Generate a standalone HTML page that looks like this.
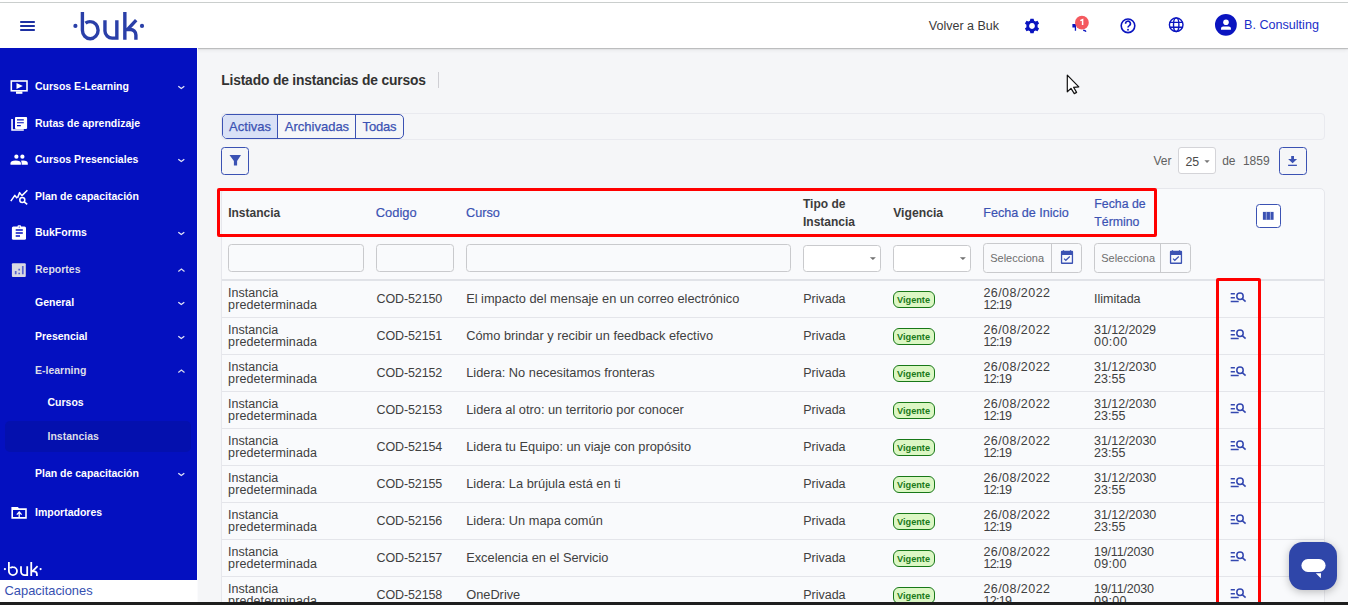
<!DOCTYPE html>
<html><head><meta charset="utf-8"><style>
*{box-sizing:border-box;margin:0;padding:0}
html,body{width:1348px;height:605px;overflow:hidden;background:#f5f6f8;font-family:"Liberation Sans",sans-serif;position:relative}
.a{position:absolute;white-space:nowrap}
svg{position:absolute;overflow:visible}
</style></head><body>
<div class="a" style="left:0;top:0;width:1348px;height:2px;background:#fff"></div>
<div class="a" style="left:0;top:2px;width:1348px;height:1px;background:#ccd0cf"></div>
<div class="a" style="left:0;top:3px;width:1348px;height:45px;background:#fff;box-shadow:0 1px 1px rgba(0,0,0,.19),0 2px 4px rgba(0,0,0,.07);z-index:5"></div>
<svg style="left:0;top:0;z-index:6" width="1348" height="48"><rect x="20.2" y="21" width="14.6" height="2" fill="#1d30a2"/><rect x="20.2" y="25" width="14.6" height="2" fill="#1d30a2"/><rect x="20.2" y="29" width="14.6" height="2" fill="#1d30a2"/><g fill="none" stroke="#2a3fa8" stroke-width="3.4"><path d="M82.4 11.9 V30.2 A7.85 8.55 0 1 0 90.25 21.6 A7.85 8.55 0 0 0 85.5 23.2"/><path d="M104.95 20.2 V31 A7.2 7.2 0 0 0 112.2 38.1 H116.85 V20.2"/><path d="M124.85 11.9 V39.8 M136.2 20.2 L127.5 29.5 H130.3 A5.5 5.5 0 0 1 135.9 35 V39.8"/></g><circle cx="75.4" cy="25.9" r="2.1" fill="#2a3fa8"/><circle cx="142" cy="25.9" r="2.1" fill="#2a3fa8"/></svg>
<div style="position:absolute;left:0;top:0;z-index:7"><div class="a" style="left:928.8px;top:20px;font-size:12.5px;line-height:12.5px;color:#3a3a3a;font-weight:normal;">Volver a Buk</div>
<div class="a" style="left:1244px;top:19px;font-size:12.6px;line-height:12.6px;color:#1b2ec8;font-weight:normal;">B. Consulting</div>
</div><svg style="left:0;top:0;z-index:7" width="1348" height="48"><g transform="translate(1032 26)"><path fill="#0a14c0" fill-rule="evenodd" d="M-1.6 -7.3 H1.6 L2.1 -5.3 L3.6 -4.5 L5.5 -5.3 L7.1 -2.6 L5.6 -1.2 V1.2 L7.1 2.6 L5.5 5.3 L3.6 4.5 L2.1 5.3 L1.6 7.3 H-1.6 L-2.1 5.3 L-3.6 4.5 L-5.5 5.3 L-7.1 2.6 L-5.6 1.2 V-1.2 L-7.1 -2.6 L-5.5 -5.3 L-3.6 -4.5 L-2.1 -5.3 Z M0 -2.9 A2.9 2.9 0 1 0 0.01 -2.9 Z"/></g><path fill="#0a14c0" d="M1072.4 24 H1076 V27.5 H1076.1 V30.7 H1074.8 V27.5 H1072.4 Z"/><path stroke="#0a14c0" stroke-width="1.5" fill="none" d="M1083.2 30.2 Q1085.2 30.4 1086 31.6"/><circle cx="1081.9" cy="22.7" r="6.9" fill="#f4595e"/><path d="M1080.3 20.6 L1082.6 19.7 V24.9" fill="none" stroke="#fff" stroke-width="1.5"/><circle cx="1128" cy="25.8" r="6.8" fill="none" stroke="#0a14c0" stroke-width="1.6"/><path d="M1125.6 23.8 A2.4 2.4 0 1 1 1129.3 25.6 Q1128 26.3 1128 27.6" fill="none" stroke="#0a14c0" stroke-width="1.6"/><circle cx="1128" cy="29.8" r="0.95" fill="#0a14c0"/><g fill="none" stroke="#0a14c0" stroke-width="1.4"><circle cx="1176.2" cy="24.7" r="6.8"/><ellipse cx="1176.2" cy="24.7" rx="2.7" ry="6.8"/><path d="M1169.8 22.4 H1182.6 M1169.8 27.3 H1182.6"/></g><circle cx="1225.9" cy="24.8" r="10.9" fill="#0a14c0"/><circle cx="1226" cy="22.3" r="2.8" fill="#fff"/><path d="M1221 29.8 V28.2 Q1221 26.4 1223.2 26.4 H1228.7 Q1230.9 26.4 1230.9 28.2 V29.8 Z" fill="#fff"/></svg>
<div class="a" style="left:0;top:48px;width:197px;height:532px;background:#0410c0;z-index:6"></div>
<div class="a" style="left:0;top:580px;width:197px;height:22px;background:#fff;z-index:6"></div>
<div class="a" style="left:197px;top:48px;width:1px;height:554px;background:#fbfbfd;z-index:6"></div>
<div class="a" style="left:5px;top:421px;width:186px;height:31px;background:#0410ae;border-radius:5px;z-index:6"></div>
<div style="position:absolute;left:0;top:0;z-index:7"><div class="a" style="left:35px;top:81px;font-size:10.5px;line-height:10.5px;color:#fff;font-weight:bold;">Cursos E-Learning</div>
<div class="a" style="left:35px;top:118px;font-size:10.5px;line-height:10.5px;color:#fff;font-weight:bold;">Rutas de aprendizaje</div>
<div class="a" style="left:35px;top:154px;font-size:10.5px;line-height:10.5px;color:#fff;font-weight:bold;">Cursos Presenciales</div>
<div class="a" style="left:35px;top:191px;font-size:10.5px;line-height:10.5px;color:#fff;font-weight:bold;">Plan de capacitación</div>
<div class="a" style="left:35px;top:227px;font-size:10.5px;line-height:10.5px;color:#fff;font-weight:bold;">BukForms</div>
<div class="a" style="left:35px;top:264px;font-size:10.5px;line-height:10.5px;color:#dcdde8;font-weight:bold;">Reportes</div>
<div class="a" style="left:35px;top:297px;font-size:10.5px;line-height:10.5px;color:#fff;font-weight:bold;">General</div>
<div class="a" style="left:35px;top:331px;font-size:10.5px;line-height:10.5px;color:#fff;font-weight:bold;">Presencial</div>
<div class="a" style="left:35px;top:365px;font-size:10.5px;line-height:10.5px;color:#dcdde8;font-weight:bold;">E-learning</div>
<div class="a" style="left:47.5px;top:397px;font-size:10.5px;line-height:10.5px;color:#fff;font-weight:bold;">Cursos</div>
<div class="a" style="left:47.5px;top:431px;font-size:10.5px;line-height:10.5px;color:#dcdde8;font-weight:bold;">Instancias</div>
<div class="a" style="left:35px;top:468px;font-size:10.5px;line-height:10.5px;color:#fff;font-weight:bold;">Plan de capacitación</div>
<div class="a" style="left:35px;top:507px;font-size:10.5px;line-height:10.5px;color:#fff;font-weight:bold;">Importadores</div>
<svg style="left:0;top:0" width="197" height="605"><path d="M178.3 86.2 L181.3 88.5 L184.3 86.2" fill="none" stroke="#e4e6f7" stroke-width="1.3"/><path d="M178.3 159.2 L181.3 161.5 L184.3 159.2" fill="none" stroke="#e4e6f7" stroke-width="1.3"/><path d="M178.3 232.2 L181.3 234.5 L184.3 232.2" fill="none" stroke="#e4e6f7" stroke-width="1.3"/><path d="M178.3 271.5 L181.4 269.1 L184.5 271.5" fill="none" stroke="#d6d8ec" stroke-width="1.3"/><path d="M178.3 302.2 L181.3 304.5 L184.3 302.2" fill="none" stroke="#e4e6f7" stroke-width="1.3"/><path d="M178.3 336.2 L181.3 338.5 L184.3 336.2" fill="none" stroke="#e4e6f7" stroke-width="1.3"/><path d="M178.3 372.5 L181.4 370.1 L184.5 372.5" fill="none" stroke="#d6d8ec" stroke-width="1.3"/><path d="M178.3 473.2 L181.3 475.5 L184.3 473.2" fill="none" stroke="#e4e6f7" stroke-width="1.3"/><rect x="11.3" y="81" width="15.7" height="9.8" fill="none" stroke="#fff" stroke-width="1.6"/><rect x="16" y="91.4" width="6.4" height="2.4" fill="#fff"/><path d="M16.5 83 L22.9 85.9 L16.5 88.9 Z" fill="#fff"/><rect x="15" y="117.1" width="12.1" height="11.8" fill="#fff" rx="0.8"/><path d="M12.05 119 V130.05 H23.8" fill="none" stroke="#fff" stroke-width="1.6"/><path d="M17 119.9 H23.8 M17 122.8 H23.8 M17 125.6 H20.8" stroke="#0410c0" stroke-width="1.1"/><circle cx="16.4" cy="156.7" r="2.1" fill="#fff"/><circle cx="22.4" cy="156.7" r="2.1" fill="#fff"/><path d="M10.5 164.8 V163.3 Q10.5 160.6 15.7 160.6 Q20.9 160.6 20.9 163.3 V164.8 Z" fill="#fff"/><path d="M21.6 164.8 V163 Q21.6 161.2 20.6 160.8 Q21.5 160.6 23 160.6 Q27.8 160.6 27.8 163.3 V164.8 Z" fill="#fff"/><path d="M10.8 201.1 L14.8 195.4 L17.2 198.3 M17.6 197.6 L19.6 192.6 L21.9 195.6 L27.4 190.3" fill="none" stroke="#fff" stroke-width="1.5" stroke-linejoin="round"/><circle cx="22.3" cy="199.9" r="2.5" fill="none" stroke="#fff" stroke-width="1.5"/><path d="M24.2 201.8 L27.2 204.4" stroke="#fff" stroke-width="1.6"/><rect x="11.9" y="226.6" width="14.1" height="13.2" rx="1.5" fill="#fff"/><rect x="17.5" y="225.3" width="3.6" height="2.2" rx="1" fill="#fff"/><path d="M15.7 229.95 H22.8 M15.7 233 H22.8 M15.7 236.05 H20" stroke="#0410c0" stroke-width="1.6"/><circle cx="19.3" cy="227" r="0.6" fill="#0410c0"/><rect x="11.9" y="263.2" width="13.9" height="13.8" rx="1" fill="#d9d9e2"/><path d="M15.7 274.3 V271 M19.2 274.3 V272.8 M19.2 270.4 V268.8 M22.8 274.3 V266" stroke="#5b66cf" stroke-width="1.7"/><path d="M11.4 507 H17.8 L19 508.2 H26.8 V518.7 H11.4 Z" fill="#fff"/><rect x="13" y="510" width="12.2" height="7" fill="#0410c0"/><path d="M19.2 517.2 V512.4 M16.8 514.6 L19.2 512 L21.6 514.6" fill="none" stroke="#fff" stroke-width="1.3"/><g fill="none" stroke="#fff" stroke-width="1.8"><path d="M8.9 561.9 V571.1 A4.05 4.0 0 1 0 12.95 567.1 A4.05 4.0 0 0 0 10.2 568"/><path d="M21 566.2 V571.5 A3.6 3.6 0 0 0 24.6 575.1 H27.2 V566.2"/><path d="M31.25 561.9 V576 M37.6 566.2 L32.4 571.3 H34 A2.9 2.9 0 0 1 36.9 574.2 V576"/></g><circle cx="4.9" cy="569.1" r="1.1" fill="#fff"/><circle cx="40.6" cy="569.1" r="1.1" fill="#fff"/></svg><div class="a" style="left:4.5px;top:585px;font-size:12.9px;line-height:12.9px;color:#3650b0;font-weight:normal;">Capacitaciones</div>
</div>
<div class="a" style="left:221.2px;top:74px;font-size:13.8px;line-height:13.8px;color:#323232;font-weight:bold;letter-spacing:-0.15px">Listado de instancias de cursos</div>
<div class="a" style="left:438px;top:72px;width:1px;height:16px;background:#cfcfd4"></div>
<div class="a" style="left:221px;top:113px;width:1104px;height:27px;border:1px solid #e9eaef;border-radius:4px"></div>
<div class="a" style="left:222px;top:114px;width:182px;height:25px;border:1.2px solid #3b52b3;border-radius:5px;background:transparent;overflow:hidden"><div class="a" style="left:0;top:0;width:54px;height:23px;background:#d9e1f6"></div><div class="a" style="left:54px;top:0;width:1px;height:23px;background:#3b52b3"></div><div class="a" style="left:132px;top:0;width:1px;height:23px;background:#3b52b3"></div></div>
<div class="a" style="left:229.1px;top:120px;font-size:13px;line-height:13px;color:#3b52b3;font-weight:normal;-webkit-text-stroke:0.25px #3b52b3">Activas</div>
<div class="a" style="left:284.8px;top:120px;font-size:13px;line-height:13px;color:#3b52b3;font-weight:normal;-webkit-text-stroke:0.25px #3b52b3">Archivadas</div>
<div class="a" style="left:362.6px;top:120px;font-size:13px;line-height:13px;color:#3b52b3;font-weight:normal;letter-spacing:-0.2px;-webkit-text-stroke:0.25px #3b52b3">Todas</div>
<div class="a" style="left:221px;top:147px;width:28px;height:28px;border:1px solid #3b52b3;border-radius:3.5px;background:transparent"></div>
<div class="a" style="left:1153.4px;top:155px;font-size:12px;line-height:12px;color:#606060;font-weight:normal;">Ver</div>
<div class="a" style="left:1178px;top:147px;width:38px;height:27px;border:1px solid #d4d4d8;border-radius:3px;background:#fff"></div>
<div class="a" style="left:1185.4px;top:156px;font-size:12.3px;line-height:12.3px;color:#4a4a4a;font-weight:normal;">25</div>
<div class="a" style="left:1222.2px;top:155px;font-size:12px;line-height:12px;color:#606060;font-weight:normal;">de</div>
<div class="a" style="left:1242.9px;top:155px;font-size:12px;line-height:12px;color:#606060;font-weight:normal;">1859</div>
<div class="a" style="left:1279px;top:147px;width:28px;height:28px;border:1px solid #3b52b3;border-radius:3.5px;background:transparent"></div>
<div class="a" style="left:221px;top:188px;width:1104px;height:430px;border:1px solid #e6e7ec;border-radius:5px;background:#f9fafc"></div>
<div class="a" style="left:228.2px;top:207px;font-size:12px;line-height:12px;color:#3c3c3c;font-weight:bold;">Instancia</div>
<div class="a" style="left:375.8px;top:207px;font-size:12.9px;line-height:12.9px;color:#3b52b3;font-weight:normal;-webkit-text-stroke:0.2px #3b52b3">Codigo</div>
<div class="a" style="left:466px;top:207px;font-size:12.7px;line-height:12.7px;color:#3b52b3;font-weight:normal;-webkit-text-stroke:0.2px #3b52b3">Curso</div>
<div class="a" style="left:803px;top:198px;font-size:12px;line-height:12px;color:#3c3c3c;font-weight:bold;">Tipo de</div>
<div class="a" style="left:803px;top:216px;font-size:12px;line-height:12px;color:#3c3c3c;font-weight:bold;">Instancia</div>
<div class="a" style="left:893.2px;top:207px;font-size:12.2px;line-height:12.2px;color:#3c3c3c;font-weight:bold;">Vigencia</div>
<div class="a" style="left:983.3px;top:207px;font-size:12.6px;line-height:12.6px;color:#3b52b3;font-weight:normal;-webkit-text-stroke:0.2px #3b52b3">Fecha de Inicio</div>
<div class="a" style="left:1094.3px;top:198px;font-size:12.3px;line-height:12.3px;color:#3b52b3;font-weight:normal;-webkit-text-stroke:0.2px #3b52b3">Fecha de</div>
<div class="a" style="left:1094.3px;top:216px;font-size:12.3px;line-height:12.3px;color:#3b52b3;font-weight:normal;-webkit-text-stroke:0.2px #3b52b3">Término</div>
<div class="a" style="left:1256px;top:204px;width:25px;height:24px;border:1.2px solid #3b52b3;border-radius:3.5px;background:#fff"></div>
<div class="a" style="left:228px;top:244px;width:136px;height:28px;border:1px solid #c9cacd;border-radius:3.5px;background:transparent"></div>
<div class="a" style="left:376px;top:244px;width:78px;height:28px;border:1px solid #c9cacd;border-radius:3.5px;background:transparent"></div>
<div class="a" style="left:466px;top:244px;width:325px;height:28px;border:1px solid #c9cacd;border-radius:3.5px;background:transparent"></div>
<div class="a" style="left:803px;top:245px;width:78px;height:27px;border:1px solid #c9cacd;border-radius:3.5px;background:#fff"></div>
<div class="a" style="left:893px;top:245px;width:78px;height:27px;border:1px solid #c9cacd;border-radius:3.5px;background:#fff"></div>
<div class="a" style="left:983px;top:243px;width:99px;height:30px;border:1px solid #c9cacd;border-radius:3.5px;background:transparent"></div>
<div class="a" style="left:1051px;top:243px;width:1px;height:30px;background:#c9cacd"></div>
<div class="a" style="left:990.2px;top:253px;font-size:11px;line-height:11px;color:#6e6e6e;font-weight:normal;">Selecciona</div>
<div class="a" style="left:1094px;top:243px;width:97px;height:30px;border:1px solid #c9cacd;border-radius:3.5px;background:transparent"></div>
<div class="a" style="left:1160px;top:243px;width:1px;height:30px;background:#c9cacd"></div>
<div class="a" style="left:1101.2px;top:253px;font-size:11px;line-height:11px;color:#6e6e6e;font-weight:normal;">Selecciona</div>
<div class="a" style="left:222px;top:279px;width:1102px;height:2px;background:#e1e3e8"></div>
<div class="a" style="left:228.1px;top:287px;font-size:12.5px;line-height:12.5px;color:#404040;font-weight:normal;">Instancia</div>
<div class="a" style="left:228.1px;top:299px;font-size:12.5px;line-height:12.5px;color:#404040;font-weight:normal;letter-spacing:0.1px">predeterminada</div>
<div class="a" style="left:376.6px;top:293px;font-size:12.5px;line-height:12.5px;color:#404040;font-weight:normal;letter-spacing:-0.13px">COD-52150</div>
<div class="a" style="left:466.2px;top:293px;font-size:12.8px;line-height:12.8px;color:#404040;font-weight:normal;">El impacto del mensaje en un correo electrónico</div>
<div class="a" style="left:803.2px;top:293px;font-size:12.5px;line-height:12.5px;color:#404040;font-weight:normal;">Privada</div>
<div class="a" style="left:893px;top:291px;width:42px;height:17px;border:1.2px solid #187818;border-radius:6px;background:#dcf7c4"></div>
<div class="a" style="left:897px;top:296px;font-size:9.2px;line-height:9.2px;color:#1a7a1a;font-weight:bold;">Vigente</div>
<div class="a" style="left:983.4px;top:287px;font-size:12.5px;line-height:12.5px;color:#404040;font-weight:normal;letter-spacing:0.45px">26/08/2022</div>
<div class="a" style="left:983.4px;top:299px;font-size:12.5px;line-height:12.5px;color:#404040;font-weight:normal;letter-spacing:-0.7px">12:19</div>
<div class="a" style="left:1094px;top:293px;font-size:12.5px;line-height:12.5px;color:#404040;font-weight:normal;">Ilimitada</div>
<div class="a" style="left:222px;top:317px;width:1102px;height:1px;background:#e4e5ea"></div>
<div class="a" style="left:228.1px;top:324px;font-size:12.5px;line-height:12.5px;color:#404040;font-weight:normal;">Instancia</div>
<div class="a" style="left:228.1px;top:336px;font-size:12.5px;line-height:12.5px;color:#404040;font-weight:normal;letter-spacing:0.1px">predeterminada</div>
<div class="a" style="left:376.6px;top:330px;font-size:12.5px;line-height:12.5px;color:#404040;font-weight:normal;letter-spacing:-0.13px">COD-52151</div>
<div class="a" style="left:466.2px;top:330px;font-size:12.8px;line-height:12.8px;color:#404040;font-weight:normal;">Cómo brindar y recibir un feedback efectivo</div>
<div class="a" style="left:803.2px;top:330px;font-size:12.5px;line-height:12.5px;color:#404040;font-weight:normal;">Privada</div>
<div class="a" style="left:893px;top:328px;width:42px;height:17px;border:1.2px solid #187818;border-radius:6px;background:#dcf7c4"></div>
<div class="a" style="left:897px;top:333px;font-size:9.2px;line-height:9.2px;color:#1a7a1a;font-weight:bold;">Vigente</div>
<div class="a" style="left:983.4px;top:324px;font-size:12.5px;line-height:12.5px;color:#404040;font-weight:normal;letter-spacing:0.45px">26/08/2022</div>
<div class="a" style="left:983.4px;top:336px;font-size:12.5px;line-height:12.5px;color:#404040;font-weight:normal;letter-spacing:-0.7px">12:19</div>
<div class="a" style="left:1094px;top:324px;font-size:12.5px;line-height:12.5px;color:#404040;font-weight:normal;letter-spacing:-0.06px">31/12/2029</div>
<div class="a" style="left:1094px;top:336px;font-size:12.5px;line-height:12.5px;color:#404040;font-weight:normal;letter-spacing:0.45px">00:00</div>
<div class="a" style="left:222px;top:354px;width:1102px;height:1px;background:#e4e5ea"></div>
<div class="a" style="left:228.1px;top:361px;font-size:12.5px;line-height:12.5px;color:#404040;font-weight:normal;">Instancia</div>
<div class="a" style="left:228.1px;top:373px;font-size:12.5px;line-height:12.5px;color:#404040;font-weight:normal;letter-spacing:0.1px">predeterminada</div>
<div class="a" style="left:376.6px;top:367px;font-size:12.5px;line-height:12.5px;color:#404040;font-weight:normal;letter-spacing:-0.13px">COD-52152</div>
<div class="a" style="left:466.2px;top:367px;font-size:12.8px;line-height:12.8px;color:#404040;font-weight:normal;">Lidera: No necesitamos fronteras</div>
<div class="a" style="left:803.2px;top:367px;font-size:12.5px;line-height:12.5px;color:#404040;font-weight:normal;">Privada</div>
<div class="a" style="left:893px;top:365px;width:42px;height:17px;border:1.2px solid #187818;border-radius:6px;background:#dcf7c4"></div>
<div class="a" style="left:897px;top:370px;font-size:9.2px;line-height:9.2px;color:#1a7a1a;font-weight:bold;">Vigente</div>
<div class="a" style="left:983.4px;top:361px;font-size:12.5px;line-height:12.5px;color:#404040;font-weight:normal;letter-spacing:0.45px">26/08/2022</div>
<div class="a" style="left:983.4px;top:373px;font-size:12.5px;line-height:12.5px;color:#404040;font-weight:normal;letter-spacing:-0.7px">12:19</div>
<div class="a" style="left:1094px;top:361px;font-size:12.5px;line-height:12.5px;color:#404040;font-weight:normal;letter-spacing:-0.03px">31/12/2030</div>
<div class="a" style="left:1094px;top:373px;font-size:12.5px;line-height:12.5px;color:#404040;font-weight:normal;letter-spacing:0.05px">23:55</div>
<div class="a" style="left:222px;top:391px;width:1102px;height:1px;background:#e4e5ea"></div>
<div class="a" style="left:228.1px;top:398px;font-size:12.5px;line-height:12.5px;color:#404040;font-weight:normal;">Instancia</div>
<div class="a" style="left:228.1px;top:410px;font-size:12.5px;line-height:12.5px;color:#404040;font-weight:normal;letter-spacing:0.1px">predeterminada</div>
<div class="a" style="left:376.6px;top:404px;font-size:12.5px;line-height:12.5px;color:#404040;font-weight:normal;letter-spacing:-0.13px">COD-52153</div>
<div class="a" style="left:466.2px;top:404px;font-size:12.8px;line-height:12.8px;color:#404040;font-weight:normal;">Lidera al otro: un territorio por conocer</div>
<div class="a" style="left:803.2px;top:404px;font-size:12.5px;line-height:12.5px;color:#404040;font-weight:normal;">Privada</div>
<div class="a" style="left:893px;top:402px;width:42px;height:17px;border:1.2px solid #187818;border-radius:6px;background:#dcf7c4"></div>
<div class="a" style="left:897px;top:407px;font-size:9.2px;line-height:9.2px;color:#1a7a1a;font-weight:bold;">Vigente</div>
<div class="a" style="left:983.4px;top:398px;font-size:12.5px;line-height:12.5px;color:#404040;font-weight:normal;letter-spacing:0.45px">26/08/2022</div>
<div class="a" style="left:983.4px;top:410px;font-size:12.5px;line-height:12.5px;color:#404040;font-weight:normal;letter-spacing:-0.7px">12:19</div>
<div class="a" style="left:1094px;top:398px;font-size:12.5px;line-height:12.5px;color:#404040;font-weight:normal;letter-spacing:-0.03px">31/12/2030</div>
<div class="a" style="left:1094px;top:410px;font-size:12.5px;line-height:12.5px;color:#404040;font-weight:normal;letter-spacing:0.05px">23:55</div>
<div class="a" style="left:222px;top:428px;width:1102px;height:1px;background:#e4e5ea"></div>
<div class="a" style="left:228.1px;top:435px;font-size:12.5px;line-height:12.5px;color:#404040;font-weight:normal;">Instancia</div>
<div class="a" style="left:228.1px;top:447px;font-size:12.5px;line-height:12.5px;color:#404040;font-weight:normal;letter-spacing:0.1px">predeterminada</div>
<div class="a" style="left:376.6px;top:441px;font-size:12.5px;line-height:12.5px;color:#404040;font-weight:normal;letter-spacing:-0.13px">COD-52154</div>
<div class="a" style="left:466.2px;top:441px;font-size:12.8px;line-height:12.8px;color:#404040;font-weight:normal;">Lidera tu Equipo: un viaje con propósito</div>
<div class="a" style="left:803.2px;top:441px;font-size:12.5px;line-height:12.5px;color:#404040;font-weight:normal;">Privada</div>
<div class="a" style="left:893px;top:439px;width:42px;height:17px;border:1.2px solid #187818;border-radius:6px;background:#dcf7c4"></div>
<div class="a" style="left:897px;top:444px;font-size:9.2px;line-height:9.2px;color:#1a7a1a;font-weight:bold;">Vigente</div>
<div class="a" style="left:983.4px;top:435px;font-size:12.5px;line-height:12.5px;color:#404040;font-weight:normal;letter-spacing:0.45px">26/08/2022</div>
<div class="a" style="left:983.4px;top:447px;font-size:12.5px;line-height:12.5px;color:#404040;font-weight:normal;letter-spacing:-0.7px">12:19</div>
<div class="a" style="left:1094px;top:435px;font-size:12.5px;line-height:12.5px;color:#404040;font-weight:normal;letter-spacing:-0.03px">31/12/2030</div>
<div class="a" style="left:1094px;top:447px;font-size:12.5px;line-height:12.5px;color:#404040;font-weight:normal;letter-spacing:0.05px">23:55</div>
<div class="a" style="left:222px;top:465px;width:1102px;height:1px;background:#e4e5ea"></div>
<div class="a" style="left:228.1px;top:472px;font-size:12.5px;line-height:12.5px;color:#404040;font-weight:normal;">Instancia</div>
<div class="a" style="left:228.1px;top:484px;font-size:12.5px;line-height:12.5px;color:#404040;font-weight:normal;letter-spacing:0.1px">predeterminada</div>
<div class="a" style="left:376.6px;top:478px;font-size:12.5px;line-height:12.5px;color:#404040;font-weight:normal;letter-spacing:-0.13px">COD-52155</div>
<div class="a" style="left:466.2px;top:478px;font-size:12.8px;line-height:12.8px;color:#404040;font-weight:normal;">Lidera: La brújula está en ti</div>
<div class="a" style="left:803.2px;top:478px;font-size:12.5px;line-height:12.5px;color:#404040;font-weight:normal;">Privada</div>
<div class="a" style="left:893px;top:476px;width:42px;height:17px;border:1.2px solid #187818;border-radius:6px;background:#dcf7c4"></div>
<div class="a" style="left:897px;top:481px;font-size:9.2px;line-height:9.2px;color:#1a7a1a;font-weight:bold;">Vigente</div>
<div class="a" style="left:983.4px;top:472px;font-size:12.5px;line-height:12.5px;color:#404040;font-weight:normal;letter-spacing:0.45px">26/08/2022</div>
<div class="a" style="left:983.4px;top:484px;font-size:12.5px;line-height:12.5px;color:#404040;font-weight:normal;letter-spacing:-0.7px">12:19</div>
<div class="a" style="left:1094px;top:472px;font-size:12.5px;line-height:12.5px;color:#404040;font-weight:normal;letter-spacing:-0.03px">31/12/2030</div>
<div class="a" style="left:1094px;top:484px;font-size:12.5px;line-height:12.5px;color:#404040;font-weight:normal;letter-spacing:0.05px">23:55</div>
<div class="a" style="left:222px;top:502px;width:1102px;height:1px;background:#e4e5ea"></div>
<div class="a" style="left:228.1px;top:509px;font-size:12.5px;line-height:12.5px;color:#404040;font-weight:normal;">Instancia</div>
<div class="a" style="left:228.1px;top:521px;font-size:12.5px;line-height:12.5px;color:#404040;font-weight:normal;letter-spacing:0.1px">predeterminada</div>
<div class="a" style="left:376.6px;top:515px;font-size:12.5px;line-height:12.5px;color:#404040;font-weight:normal;letter-spacing:-0.13px">COD-52156</div>
<div class="a" style="left:466.2px;top:515px;font-size:12.8px;line-height:12.8px;color:#404040;font-weight:normal;">Lidera: Un mapa común</div>
<div class="a" style="left:803.2px;top:515px;font-size:12.5px;line-height:12.5px;color:#404040;font-weight:normal;">Privada</div>
<div class="a" style="left:893px;top:513px;width:42px;height:17px;border:1.2px solid #187818;border-radius:6px;background:#dcf7c4"></div>
<div class="a" style="left:897px;top:518px;font-size:9.2px;line-height:9.2px;color:#1a7a1a;font-weight:bold;">Vigente</div>
<div class="a" style="left:983.4px;top:509px;font-size:12.5px;line-height:12.5px;color:#404040;font-weight:normal;letter-spacing:0.45px">26/08/2022</div>
<div class="a" style="left:983.4px;top:521px;font-size:12.5px;line-height:12.5px;color:#404040;font-weight:normal;letter-spacing:-0.7px">12:19</div>
<div class="a" style="left:1094px;top:509px;font-size:12.5px;line-height:12.5px;color:#404040;font-weight:normal;letter-spacing:-0.03px">31/12/2030</div>
<div class="a" style="left:1094px;top:521px;font-size:12.5px;line-height:12.5px;color:#404040;font-weight:normal;letter-spacing:0.05px">23:55</div>
<div class="a" style="left:222px;top:539px;width:1102px;height:1px;background:#e4e5ea"></div>
<div class="a" style="left:228.1px;top:546px;font-size:12.5px;line-height:12.5px;color:#404040;font-weight:normal;">Instancia</div>
<div class="a" style="left:228.1px;top:558px;font-size:12.5px;line-height:12.5px;color:#404040;font-weight:normal;letter-spacing:0.1px">predeterminada</div>
<div class="a" style="left:376.6px;top:552px;font-size:12.5px;line-height:12.5px;color:#404040;font-weight:normal;letter-spacing:-0.13px">COD-52157</div>
<div class="a" style="left:466.2px;top:552px;font-size:12.8px;line-height:12.8px;color:#404040;font-weight:normal;">Excelencia en el Servicio</div>
<div class="a" style="left:803.2px;top:552px;font-size:12.5px;line-height:12.5px;color:#404040;font-weight:normal;">Privada</div>
<div class="a" style="left:893px;top:550px;width:42px;height:17px;border:1.2px solid #187818;border-radius:6px;background:#dcf7c4"></div>
<div class="a" style="left:897px;top:555px;font-size:9.2px;line-height:9.2px;color:#1a7a1a;font-weight:bold;">Vigente</div>
<div class="a" style="left:983.4px;top:546px;font-size:12.5px;line-height:12.5px;color:#404040;font-weight:normal;letter-spacing:0.45px">26/08/2022</div>
<div class="a" style="left:983.4px;top:558px;font-size:12.5px;line-height:12.5px;color:#404040;font-weight:normal;letter-spacing:-0.7px">12:19</div>
<div class="a" style="left:1094px;top:546px;font-size:12.5px;line-height:12.5px;color:#404040;font-weight:normal;letter-spacing:-0.18px">19/11/2030</div>
<div class="a" style="left:1094px;top:558px;font-size:12.5px;line-height:12.5px;color:#404040;font-weight:normal;letter-spacing:0.3px">09:00</div>
<div class="a" style="left:222px;top:576px;width:1102px;height:1px;background:#e4e5ea"></div>
<div class="a" style="left:228.1px;top:583px;font-size:12.5px;line-height:12.5px;color:#404040;font-weight:normal;">Instancia</div>
<div class="a" style="left:228.1px;top:595px;font-size:12.5px;line-height:12.5px;color:#404040;font-weight:normal;letter-spacing:0.1px">predeterminada</div>
<div class="a" style="left:376.6px;top:589px;font-size:12.5px;line-height:12.5px;color:#404040;font-weight:normal;letter-spacing:-0.13px">COD-52158</div>
<div class="a" style="left:466.2px;top:589px;font-size:12.8px;line-height:12.8px;color:#404040;font-weight:normal;">OneDrive</div>
<div class="a" style="left:803.2px;top:589px;font-size:12.5px;line-height:12.5px;color:#404040;font-weight:normal;">Privada</div>
<div class="a" style="left:893px;top:587px;width:42px;height:17px;border:1.2px solid #187818;border-radius:6px;background:#dcf7c4"></div>
<div class="a" style="left:897px;top:592px;font-size:9.2px;line-height:9.2px;color:#1a7a1a;font-weight:bold;">Vigente</div>
<div class="a" style="left:983.4px;top:583px;font-size:12.5px;line-height:12.5px;color:#404040;font-weight:normal;letter-spacing:0.45px">26/08/2022</div>
<div class="a" style="left:983.4px;top:595px;font-size:12.5px;line-height:12.5px;color:#404040;font-weight:normal;letter-spacing:-0.7px">12:19</div>
<div class="a" style="left:1094px;top:583px;font-size:12.5px;line-height:12.5px;color:#404040;font-weight:normal;letter-spacing:-0.18px">19/11/2030</div>
<div class="a" style="left:1094px;top:595px;font-size:12.5px;line-height:12.5px;color:#404040;font-weight:normal;letter-spacing:0.3px">09:00</div>
<svg style="left:0;top:0;z-index:2" width="1348" height="605"><g fill="none" stroke="#3448b0"><path d="M1230.7 293.8 H1234.9 M1230.7 297.8 H1234.9 M1230.7 301.6 H1238.7" stroke-width="1.5"/><circle cx="1240" cy="296.2" r="3.2" stroke-width="1.5"/><path d="M1242.3 298.6 L1245.6 301.6" stroke-width="1.6"/></g><g fill="none" stroke="#3448b0"><path d="M1230.7 330.8 H1234.9 M1230.7 334.8 H1234.9 M1230.7 338.6 H1238.7" stroke-width="1.5"/><circle cx="1240" cy="333.2" r="3.2" stroke-width="1.5"/><path d="M1242.3 335.6 L1245.6 338.6" stroke-width="1.6"/></g><g fill="none" stroke="#3448b0"><path d="M1230.7 367.8 H1234.9 M1230.7 371.8 H1234.9 M1230.7 375.6 H1238.7" stroke-width="1.5"/><circle cx="1240" cy="370.2" r="3.2" stroke-width="1.5"/><path d="M1242.3 372.6 L1245.6 375.6" stroke-width="1.6"/></g><g fill="none" stroke="#3448b0"><path d="M1230.7 404.8 H1234.9 M1230.7 408.8 H1234.9 M1230.7 412.6 H1238.7" stroke-width="1.5"/><circle cx="1240" cy="407.2" r="3.2" stroke-width="1.5"/><path d="M1242.3 409.6 L1245.6 412.6" stroke-width="1.6"/></g><g fill="none" stroke="#3448b0"><path d="M1230.7 441.8 H1234.9 M1230.7 445.8 H1234.9 M1230.7 449.6 H1238.7" stroke-width="1.5"/><circle cx="1240" cy="444.2" r="3.2" stroke-width="1.5"/><path d="M1242.3 446.6 L1245.6 449.6" stroke-width="1.6"/></g><g fill="none" stroke="#3448b0"><path d="M1230.7 478.8 H1234.9 M1230.7 482.8 H1234.9 M1230.7 486.6 H1238.7" stroke-width="1.5"/><circle cx="1240" cy="481.2" r="3.2" stroke-width="1.5"/><path d="M1242.3 483.6 L1245.6 486.6" stroke-width="1.6"/></g><g fill="none" stroke="#3448b0"><path d="M1230.7 515.8 H1234.9 M1230.7 519.8 H1234.9 M1230.7 523.6 H1238.7" stroke-width="1.5"/><circle cx="1240" cy="518.2" r="3.2" stroke-width="1.5"/><path d="M1242.3 520.6 L1245.6 523.6" stroke-width="1.6"/></g><g fill="none" stroke="#3448b0"><path d="M1230.7 552.8 H1234.9 M1230.7 556.8 H1234.9 M1230.7 560.6 H1238.7" stroke-width="1.5"/><circle cx="1240" cy="555.2" r="3.2" stroke-width="1.5"/><path d="M1242.3 557.6 L1245.6 560.6" stroke-width="1.6"/></g><g fill="none" stroke="#3448b0"><path d="M1230.7 589.8 H1234.9 M1230.7 593.8 H1234.9 M1230.7 597.6 H1238.7" stroke-width="1.5"/><circle cx="1240" cy="592.2" r="3.2" stroke-width="1.5"/><path d="M1242.3 594.6 L1245.6 597.6" stroke-width="1.6"/></g></svg>
<svg style="left:0;top:0;z-index:8" width="1348" height="605"><path d="M229.5 155 H241 L237.1 160.9 V165.6 H233.9 V160.9 Z" fill="#3b52b3"/><path d="M1291.2 156.1 H1294 V158.9 H1297.1 L1292.6 163.2 L1288.1 158.9 H1291.2 Z" fill="#3b52b3"/><rect x="1288.1" y="164.7" width="8.8" height="1.3" fill="#3b52b3"/><path d="M1204.4 160.3 H1209.7 L1207.05 162.9 Z" fill="#777"/><path d="M869.9 257.2 H875.9 L872.9 260 Z" fill="#707070"/><path d="M959.9 257.2 H965.9 L962.9 260 Z" fill="#707070"/><path d="M1262.9 211.9 H1273.6 V219.8 H1262.9 Z" fill="#3b52b3"/><path d="M1266.3 211.9 V219.8 M1270.4 211.9 V219.8" stroke="#c9d0ec" stroke-width="0.7"/><path fill-rule="evenodd" fill="#3b52b3" d="M1060.9 251.8 Q1060.9 250.8 1061.9 250.8 H1072.1000000000001 Q1073.1000000000001 250.8 1073.1000000000001 251.8 V262.9 Q1073.1000000000001 263.9 1072.1000000000001 263.9 H1061.9 Q1060.9 263.9 1060.9 262.9 Z M1062.2 254.9 V262.4 H1071.8000000000002 V254.9 Z"/><path d="M1063.5 250.3 V251.5 M1070.5 250.3 V251.5" stroke="#3b52b3" stroke-width="1.2"/><path d="M1064.0 258.6 L1065.8000000000002 260.3 L1069.8000000000002 256.5" fill="none" stroke="#3b52b3" stroke-width="1.2"/><path fill-rule="evenodd" fill="#3b52b3" d="M1169.9 251.8 Q1169.9 250.8 1170.9 250.8 H1181.1000000000001 Q1182.1000000000001 250.8 1182.1000000000001 251.8 V262.9 Q1182.1000000000001 263.9 1181.1000000000001 263.9 H1170.9 Q1169.9 263.9 1169.9 262.9 Z M1171.2 254.9 V262.4 H1180.8000000000002 V254.9 Z"/><path d="M1172.5 250.3 V251.5 M1179.5 250.3 V251.5" stroke="#3b52b3" stroke-width="1.2"/><path d="M1173.0 258.6 L1174.8000000000002 260.3 L1178.8000000000002 256.5" fill="none" stroke="#3b52b3" stroke-width="1.2"/></svg>
<div class="a" style="left:216.5px;top:188px;width:940.5px;height:49px;border:3px solid #ff0000;border-radius:2px;z-index:9"></div>
<div class="a" style="left:1216.3px;top:278.2px;width:44.5px;height:340px;border:3px solid #ff0000;border-radius:2px;z-index:9"></div>
<div class="a" style="left:1289px;top:541.5px;width:47.8px;height:48.5px;border-radius:14px;background:#2f46a9;box-shadow:0 2px 8px rgba(0,0,0,.25);z-index:9"></div>
<svg style="left:0;top:0;z-index:10" width="1348" height="605"><rect x="1301.4" y="559.1" width="24.2" height="12.9" rx="6.45" fill="#fff"/><path d="M1315.8 573.3 L1321 573.3 L1320.8 578.2 Z" fill="#fff"/><path d="M1067.3 75.1 L1067.3 91.8 L1071 88.4 L1074.3 93.6 L1076.6 92.4 L1073.6 87.3 L1078.8 86.9 Z" fill="#fff" stroke="#111" stroke-width="1.2" stroke-linejoin="round"/></svg>
<div class="a" style="left:0;top:602px;width:1348px;height:3px;background:#1e1e1e;z-index:20"></div>
</body></html>
